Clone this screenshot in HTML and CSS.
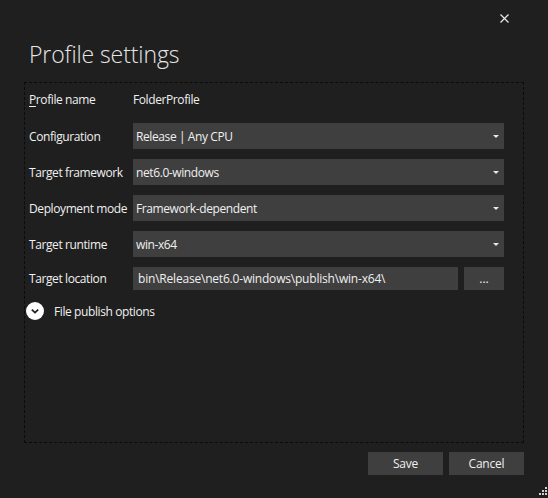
FILE: index.html
```html
<!DOCTYPE html>
<html>
<head>
<meta charset="utf-8">
<link rel="stylesheet" href="styles.css">
</head>
<body>
<div class="dialog">
  <button class="close" aria-label="Close">
    <svg width="9" height="9" viewBox="0 0 9 9"><path d="M0.5 0.5L8.5 8.5M8.5 0.5L0.5 8.5" stroke="#e8e8e8" stroke-width="1.2"/></svg>
  </button>
  <h1 class="title">Profile settings</h1>
  <div class="panel">
    <div class="row row-name">
      <span class="label"><u>P</u>rofile name</span>
      <span class="value">FolderProfile</span>
    </div>
    <div class="row">
      <span class="label">Configuration</span>
      <div class="select"><span>Release | Any CPU</span><i class="caret"></i></div>
    </div>
    <div class="row">
      <span class="label">Target framework</span>
      <div class="select"><span>net6.0-windows</span><i class="caret"></i></div>
    </div>
    <div class="row">
      <span class="label">Deployment mode</span>
      <div class="select"><span>Framework-dependent</span><i class="caret"></i></div>
    </div>
    <div class="row">
      <span class="label">Target runtime</span>
      <div class="select"><span>win-x64</span><i class="caret"></i></div>
    </div>
    <div class="row row-loc">
      <span class="label">Target location</span>
      <div class="loc">
        <div class="textbox">bin\Release\net6.0-windows\publish\win-x64\</div>
        <button class="browse">...</button>
      </div>
    </div>
    <div class="expander">
      <svg class="exp-icon" width="18" height="18" viewBox="0 0 18 18"><circle cx="9" cy="9" r="9" fill="#ffffff"/><path d="M5.8 7.6L9 10.6L12.2 7.6" fill="none" stroke="#1f1f1f" stroke-width="1.8"/></svg>
      <span>File publish options</span>
    </div>
  </div>
  <div class="footer">
    <button class="btn">Save</button>
    <button class="btn">Cancel</button>
  </div>
  <div class="grip">
    <svg width="10" height="10" viewBox="0 0 10 10" fill="#d0d0d0">
      <rect x="8" y="0" width="2" height="2"/>
      <rect x="5" y="3" width="2" height="2"/><rect x="8" y="3" width="2" height="2"/>
      <rect x="2" y="6" width="2" height="2"/><rect x="5" y="6" width="2" height="2"/><rect x="8" y="6" width="2" height="2"/>
    </svg>
  </div>
</div>
</body>
</html>
```
FILE: styles.css
```css
html, body {
  margin: 0;
  padding: 0;
  background: #1f1f1f;
}
body {
  width: 548px;
  height: 498px;
  overflow: hidden;
  font-family: "Open Sans", "Noto Sans", sans-serif;
  font-size: 12px;
  letter-spacing: -0.4px;
  color: #f0f0f0;
}
.dialog {
  position: relative;
  width: 548px;
  height: 498px;
  box-sizing: border-box;
  padding: 38px 24px 0 24px;
}
.close {
  position: absolute;
  top: 14px;
  left: 500px;
  width: 9px;
  height: 9px;
  padding: 0;
  border: 0;
  background: transparent;
  display: flex;
}
.title {
  margin: 0 0 0 5px;
  font-family: "Open Sans", sans-serif;
  font-weight: 300;
  font-size: 23px;
  line-height: 32px;
  letter-spacing: -0.1px;
  color: #e6e6e6;
  height: 44px;
}
.panel {
  width: 500px;
  height: 361px;
  box-sizing: border-box;
  border: 1px dashed #0b0b0b;
  padding: 4px 19px 0 4px;
}
.row {
  display: flex;
  align-items: center;
  height: 26px;
  margin-bottom: 10px;
}
.row-name {
  height: 24px;
  margin-bottom: 12px;
}
.label {
  width: 104px;
  flex: none;
  white-space: nowrap;
}
.label u {
  text-decoration-thickness: 1px;
  text-underline-offset: 2px;
}
.select {
  flex: 1;
  height: 26px;
  background: #3f3f3f;
  display: flex;
  align-items: center;
  justify-content: space-between;
  padding: 0 5px 0 3px;
}
.caret {
  width: 0;
  height: 0;
  border-left: 3px solid transparent;
  border-right: 3px solid transparent;
  border-top: 3px solid #e8e8e8;
  margin-top: 1px;
}
.row-loc {
  height: 23px;
  margin-top: 1px;
  margin-bottom: 12px;
}
.loc {
  flex: 1;
  display: flex;
  gap: 6px;
  height: 23px;
}
.textbox {
  flex: 1;
  background: #3f3f3f;
  display: flex;
  align-items: center;
  padding-left: 5px;
  letter-spacing: -0.2px;
}
.browse {
  width: 40px;
  border: 0;
  padding: 0;
  background: #3f3f3f;
  color: #f0f0f0;
  font-family: inherit;
  font-size: 12px;
}
.expander {
  display: flex;
  align-items: center;
  gap: 10px;
  margin-left: -3px;
  height: 18px;
  margin-top: 1px;
}
.footer {
  display: flex;
  justify-content: flex-end;
  gap: 6px;
  margin-top: 9px;
  width: 500px;
}
.btn {
  width: 75px;
  height: 23px;
  border: 0;
  padding: 0;
  background: #3f3f3f;
  color: #f0f0f0;
  font-family: inherit;
  font-size: 12px;
  letter-spacing: -0.2px;
}
.grip {
  position: absolute;
  right: 1px;
  bottom: 1px;
  display: flex;
}
```
